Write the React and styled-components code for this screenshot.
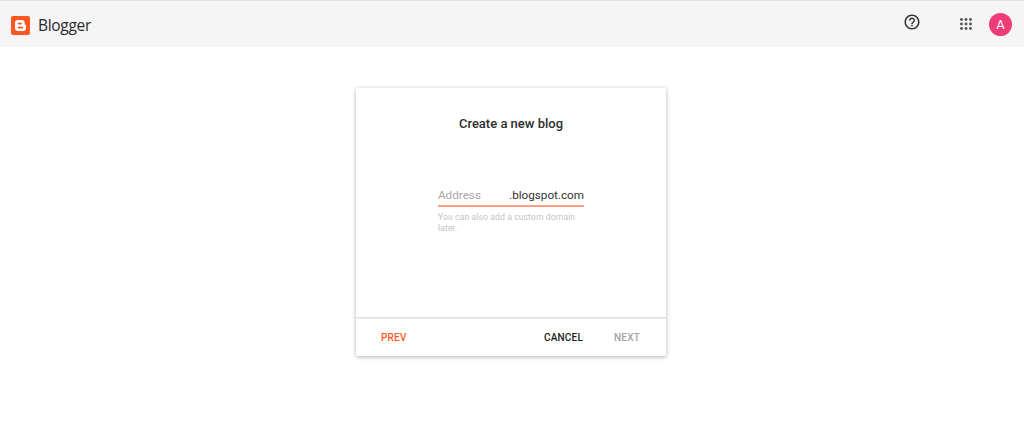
import React from 'react';
import styled, { createGlobalStyle } from 'styled-components';

const Global = createGlobalStyle`
  html, body { margin: 0; padding: 0; background: #fff; }
  body { font-family: Roboto, "Liberation Sans", sans-serif; overflow: hidden; }
`;
const Page = styled.div`
  width: 1024px; height: 436px; display: flex; flex-direction: column;
`;
const TopBar = styled.header`
  height: 46px; background: #f5f5f5; border-top: 1px solid #e2e2e2;
  display: flex; align-items: center; padding: 0 12px 0 11px;
`;
const LogoWrap = styled.svg`
  width: 19px; height: 19px; display: block; margin-top: 3px;
`;
const Brand = styled.span`
  margin-left: 8px; margin-top: 2px; font-size: 15.5px; color: #2a2a2a;
  font-family: "Open Sans", Roboto, sans-serif; letter-spacing: -0.3px;
`;
const Spacer = styled.div`flex: 1;`;
const IconSlot = styled.div`
  display: flex; margin-right: ${p => p.$mr}px; margin-bottom: ${p => p.$mb || 0}px;
`;
const Avatar = styled.div`
  width: 23px; height: 23px; border-radius: 50%; background: #ef3c76; color: #fff;
  font-size: 13px; display: flex; align-items: center; justify-content: center;
`;
const Main = styled.main`
  display: flex; justify-content: center; padding-top: 41px; padding-right: 2px;
`;
const Card = styled.section`
  width: 310px; height: 268px; background: #fff; display: flex; flex-direction: column;
  box-shadow: 0 1px 4px rgba(0,0,0,.32); border-radius: 2px;
`;
const Title = styled.h1`
  margin: 28px 0 0; font-size: 13px; line-height: 16px; font-weight: 500; text-align: center; color: #2e2e2e;
`;
const Field = styled.div`
  width: 146px; margin: 56px auto 0 auto; flex: 1;
`;
const InputRow = styled.div`
  display: flex; justify-content: space-between; align-items: baseline;
  font-size: 11.7px; line-height: 14px; padding-bottom: 3px; border-bottom: 2px solid #ff9e84;
`;
const Placeholder = styled.span`color: #a6a6a6;`;
const Suffix = styled.span`color: #333;`;
const Hint = styled.p`
  margin: 5px 0 0; font-size: 8.6px; line-height: 11px; color: #c4c4c4; letter-spacing: .1px;
`;
const Footer = styled.footer`
  height: 38px; border-top: 1px solid #e0e0e0; display: flex; align-items: center; padding: 0 26px 0 25px;
  box-shadow: inset 0 1px 0 #eee;
`;
const Action = styled.span`
  font-size: 10px; font-weight: 500; color: ${p => p.$color}; margin-left: ${p => p.$ml || 0}px;
  letter-spacing: .2px;
`;

function Logo() {
  return (
    <LogoWrap viewBox="0 0 19 19">
      <rect width="19" height="19" rx="2" fill="#ff5722" />
      <path d="M6.5 4h4.2a3 3 0 0 1 3 3v1.2c0 .3.2.5.5.5h.2c.3 0 .6.3.6.6v2.7a3 3 0 0 1-3 3H7a3 3 0 0 1-3-3V6.500A2.500 2.500 0 0 1 6.500 4z" fill="#fff" />
      <rect x="6.600" y="6.700" width="4.200" height="1.700" rx=".8" fill="#ff5722" />
      <rect x="6.600" y="10.700" width="5.800" height="1.700" rx=".8" fill="#ff5722" />
    </LogoWrap>
  );
}

function Help() {
  return (
    <svg width="18" height="18" viewBox="0 0 24 24" fill="#333">
      <path d="M11 18h2v-2h-2v2zm1-16C6.480 2 2 6.480 2 12s4.480 10 10 10 10-4.480 10-10S17.520 2 12 2zm0 18c-4.410 0-8-3.590-8-8s3.590-8 8-8 8 3.590 8 8-3.590 8-8 8zm0-14c-2.210 0-4 1.790-4 4h2c0-1.100.9-2 2-2s2 .9 2 2c0 2-3 1.750-3 5h2c0-2.250 3-2.500 3-5 0-2.210-1.790-4-4-4z" />
    </svg>
  );
}

function Apps() {
  const points = [1.5, 6, 10.5];
  return (
    <svg width="12" height="12" viewBox="0 0 12 12" fill="#555">
      {points.flatMap(y => points.map(x => <circle key={`${x}-${y}`} cx={x} cy={y} r="1.450" />))}
    </svg>
  );
}

export default function App() {
  return (
    <Page>
      <Global />
      <TopBar>
        <Logo />
        <Brand>Blogger</Brand>
        <Spacer />
        <IconSlot $mr={39} $mb={4}><Help /></IconSlot>
        <IconSlot $mr={17}><Apps /></IconSlot>
        <Avatar>A</Avatar>
      </TopBar>
      <Main>
        <Card>
          <Title>Create a new blog</Title>
          <Field>
            <InputRow>
              <Placeholder>Address</Placeholder>
              <Suffix>.blogspot.com</Suffix>
            </InputRow>
            <Hint>You can also add a custom domain later.</Hint>
          </Field>
          <Footer>
            <Action $color="#ff5722">PREV</Action>
            <Spacer />
            <Action $color="#212121">CANCEL</Action>
            <Action $color="#a3a3a3" $ml={31}>NEXT</Action>
          </Footer>
        </Card>
      </Main>
    </Page>
  );
}
